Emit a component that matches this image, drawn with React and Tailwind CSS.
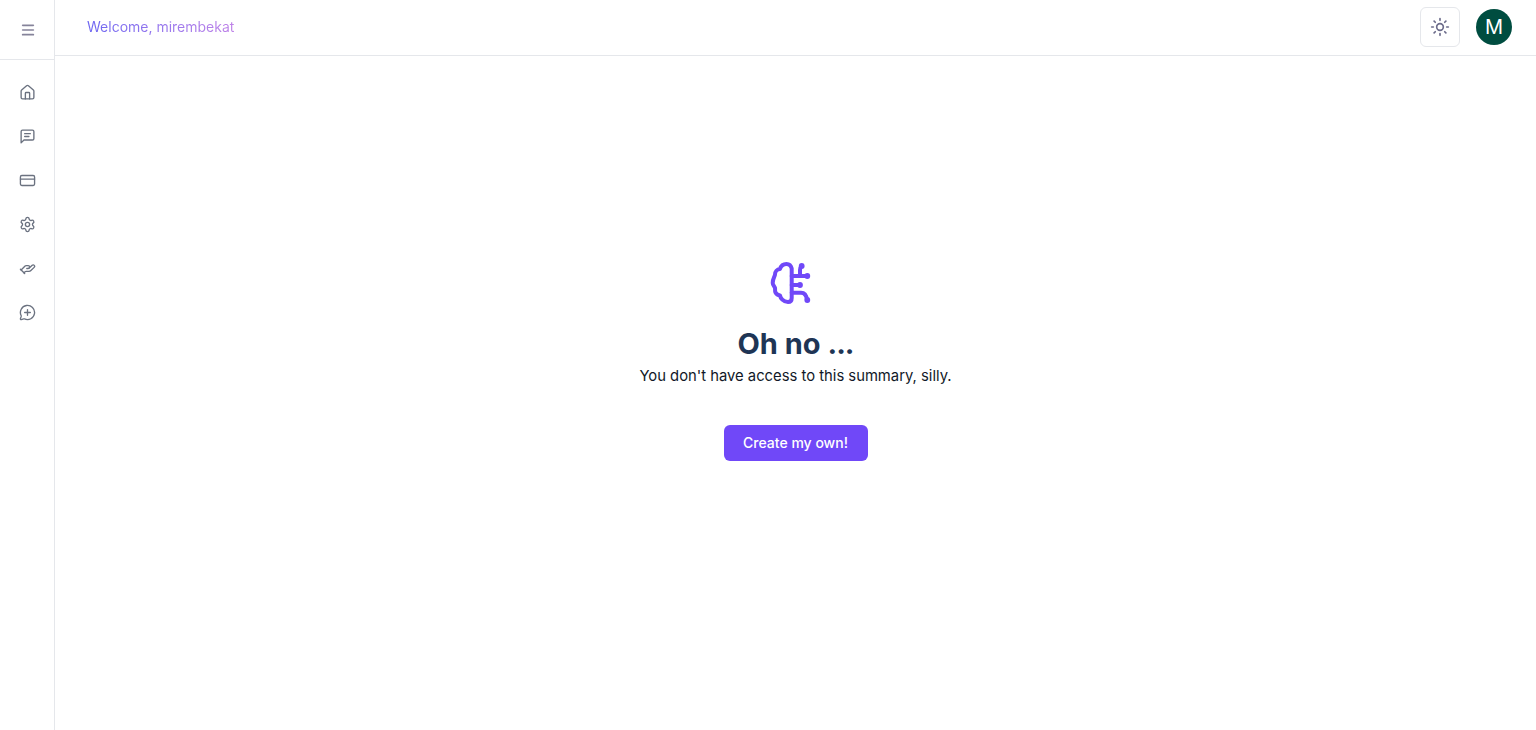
import { Menu, Sun, House, CreditCard, Settings, HandHelping, MessageCirclePlus } from 'lucide-react'

function BrainIcon() {
  return (
    <svg width="42" height="44" viewBox="0 0 42 44" fill="none" stroke="#7048f8" strokeWidth="4" strokeLinecap="round" strokeLinejoin="round" className="mr-[9px]">
      <path d="M21.700 6.500C21 3.500 19 2 16.500 2 13.500 2 11 3.700 10 7 7 7.300 5 9.500 5 12.500c0 1.500-2.300 4-2.300 8.500 0 2 2 3.500 2.300 5 .3 1.500-.3 3 .5 4.500.8 1.500 2.500 2.700 4.500 3 .5 2.500 3 6.500 8 6.500 2.500 0 3.700-1.500 3.700-4V6.500z" />
      <path d="M21.700 14H37" />
      <path d="M30 14V8c0-2 .5-3 1.700-4" />
      <path d="M21.700 23H30" />
      <path d="M21.700 30.700H31c3.500 0 5.500 2.500 6 7.300" />
      <g fill="#7048f8" stroke="none">
        <circle cx="31.700" cy="4" r="2.900" />
        <circle cx="37.300" cy="14" r="2.900" />
        <circle cx="30" cy="23" r="2.900" />
        <circle cx="37.300" cy="38" r="2.900" />
      </g>
    </svg>
  )
}

function MessageLines({ size, strokeWidth }) {
  return (
    <svg width={size} height={size} viewBox="0 0 24 24" fill="none" stroke="currentColor" strokeWidth={strokeWidth} strokeLinecap="round" strokeLinejoin="round">
      <path d="M21 15a2 2 0 0 1-2 2H7l-4 4V5a2 2 0 0 1 2-2h14a2 2 0 0 1 2 2z" />
      <path d="M8 8h8" />
      <path d="M8 12h6" />
    </svg>
  )
}

const navIcons = [House, MessageLines, CreditCard, Settings, HandHelping, MessageCirclePlus]

export default function App() {
  return (
    <div className="flex h-screen bg-white font-['Inter',sans-serif]">
      <aside className="flex w-[55px] shrink-0 flex-col border-r border-[#e5e7eb]">
        <div className="flex h-[60px] items-center justify-center border-b border-[#e5e7eb] pl-px">
          <Menu size={16} strokeWidth={2.5} className="text-[#85839a]" />
        </div>
        <nav className="flex flex-col items-center pl-px pt-[10px]">
          {navIcons.map((Icon, i) => (
            <div key={i} className="flex h-11 w-full items-center justify-center text-[#6b7280]">
              <Icon size={17} strokeWidth={1.9} />
            </div>
          ))}
        </nav>
      </aside>
      <div className="flex min-w-0 flex-1 flex-col">
        <header className="flex h-14 shrink-0 items-center justify-between border-b border-[#e5e7eb] pb-px pl-8 pr-6">
          <span className="bg-gradient-to-r from-[#6d66f1] to-[#c084e8] bg-clip-text text-sm text-transparent">
            Welcome, mirembekat
          </span>
          <div className="flex items-center gap-4">
            <button className="flex h-10 w-10 items-center justify-center rounded-md border border-[#e5e7eb] text-[#6b6b8a]">
              <Sun size={20} strokeWidth={2} />
            </button>
            <div className="flex h-9 w-9 items-center justify-center rounded-full bg-[#004d40] text-xl text-white">M</div>
          </div>
        </header>
        <main className="flex flex-1 flex-col items-center pt-[206px]">
          <BrainIcon />
          <h1 className="mt-5 text-[29px] font-bold leading-9 text-[#1e3555]">
            Oh no <span className="tracking-[-1px]">...</span>
          </h1>
          <p className="text-[14.8px] leading-7 text-[#111827]">You don't have access to this summary, silly.</p>
          <button className="mt-[35px] h-9 w-36 rounded-md bg-[#7048f8] text-sm font-medium text-white">Create my own!</button>
        </main>
      </div>
    </div>
  )
}
